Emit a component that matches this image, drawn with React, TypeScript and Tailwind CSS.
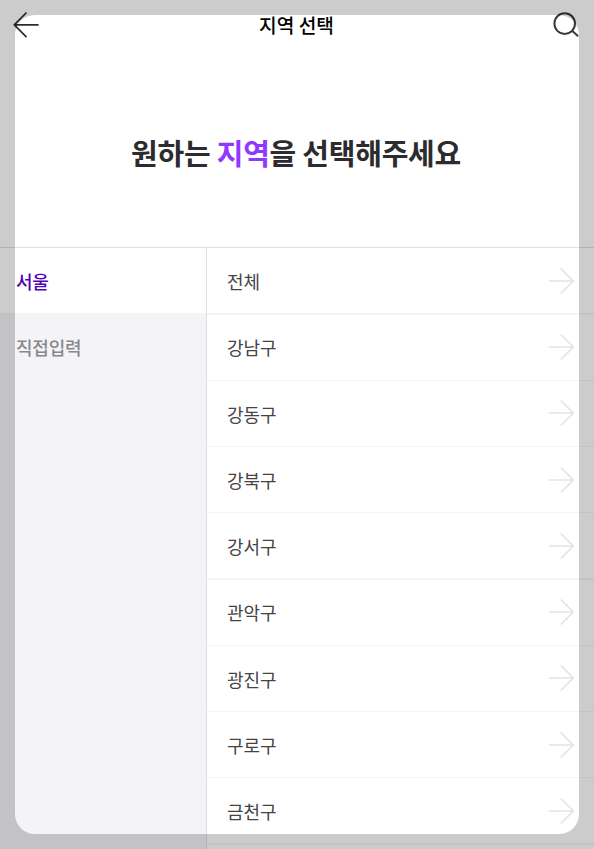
import clsx from 'clsx';

const cities = ['서울', '직접입력'];

const districts = ['전체', '강남구', '강동구', '강북구', '강서구', '관악구', '광진구', '구로구', '금천구'];

// Row pitch is 66.25px, so every fourth row takes the extra pixel
const rowStyles = [
  'h-[67px] border-b-2',
  'h-[66px] border-b pb-[2px]',
  'h-[66px] border-b pb-[2px]',
  'h-[66px] border-b',
];

function ArrowRight() {
  return (
    <svg className="w-[26px] h-[26px] shrink-0" viewBox="0 0 26 26" fill="none" stroke="#e3e3e6" strokeWidth="1.7" strokeLinecap="round" strokeLinejoin="round">
      <path d="M1.5 13H25.3M13.3 1L25.3 13L13.3 25" />
    </svg>
  );
}

export default function App() {
  return (
    <div className="relative w-full h-[849px] overflow-hidden bg-white flex flex-col font-['Noto_Sans_CJK_KR','Noto_Sans',sans-serif]">
      {/* Header */}
      <header className="h-[50px] shrink-0 flex items-center justify-between pl-[13px] pr-[14px]">
        <button aria-label="뒤로">
          <svg className="w-[27px] h-[26px] block" viewBox="0 0 27 26" fill="none" stroke="#2c2c2f" strokeWidth="1.7" strokeLinecap="round" strokeLinejoin="round">
            <path d="M25 12.8H1.3M13 1L1.3 12.8L13 24.6" />
          </svg>
        </button>
        <h1 className="text-[19.2px] font-medium text-black">지역 선택</h1>
        <button aria-label="검색">
          <svg className="w-[27px] h-[26px] block" viewBox="0 0 27 26" fill="none" stroke="#3a3a3d" strokeWidth="2" strokeLinecap="round">
            <circle cx="11.7" cy="11.6" r="10.3" />
            <path d="M19.3 19L24.6 23.8" />
          </svg>
        </button>
      </header>

      <div className="h-[198px] shrink-0 flex items-center justify-center border-b border-[#dfdfe3] pt-[7px]">
        <h2 className="text-[29px] leading-[44px] tracking-[-0.25px] pr-[2px] font-bold text-[#2c2c2f]">
          원하는 <span className="text-[#9137ff]">지역</span>을 선택해주세요
        </h2>
      </div>

      <div className="flex flex-1 min-h-0">
        {/* City list */}
        <ul className="w-[207px] shrink-0 bg-[#f4f4f7] border-r border-[#dfdfe3] text-[18px] tracking-[-0.2px] font-medium">
          {cities.map((city, i) => (
            <li
              key={city}
              className={clsx(
                'flex items-center pl-4',
                i === 0 ? 'h-[65px] bg-white text-[#5200b4] pt-[1px]' : 'h-[66px] text-[#88888b] pt-[3px]'
              )}
            >
              {city}
            </li>
          ))}
        </ul>

        {/* District list */}
        <ul className="flex-1 text-[18px] text-[#444447]">
          {districts.map((name, i) => (
            <li
              key={name}
              className={clsx('flex items-center justify-between pl-5 pr-5 border-[#f4f4f5]', rowStyles[i % 4])}
            >
              <span className={i % 4 === 2 ? 'pt-[3px]' : 'pt-[1px]'}>{name}</span>
              <ArrowRight />
            </li>
          ))}
        </ul>
      </div>

      {/* Dimmed frame around the viewport */}
      <div className="absolute inset-[15px] rounded-[20px] shadow-[0_0_0_40px_rgba(0,0,0,0.2)] pointer-events-none" />
    </div>
  );
}
